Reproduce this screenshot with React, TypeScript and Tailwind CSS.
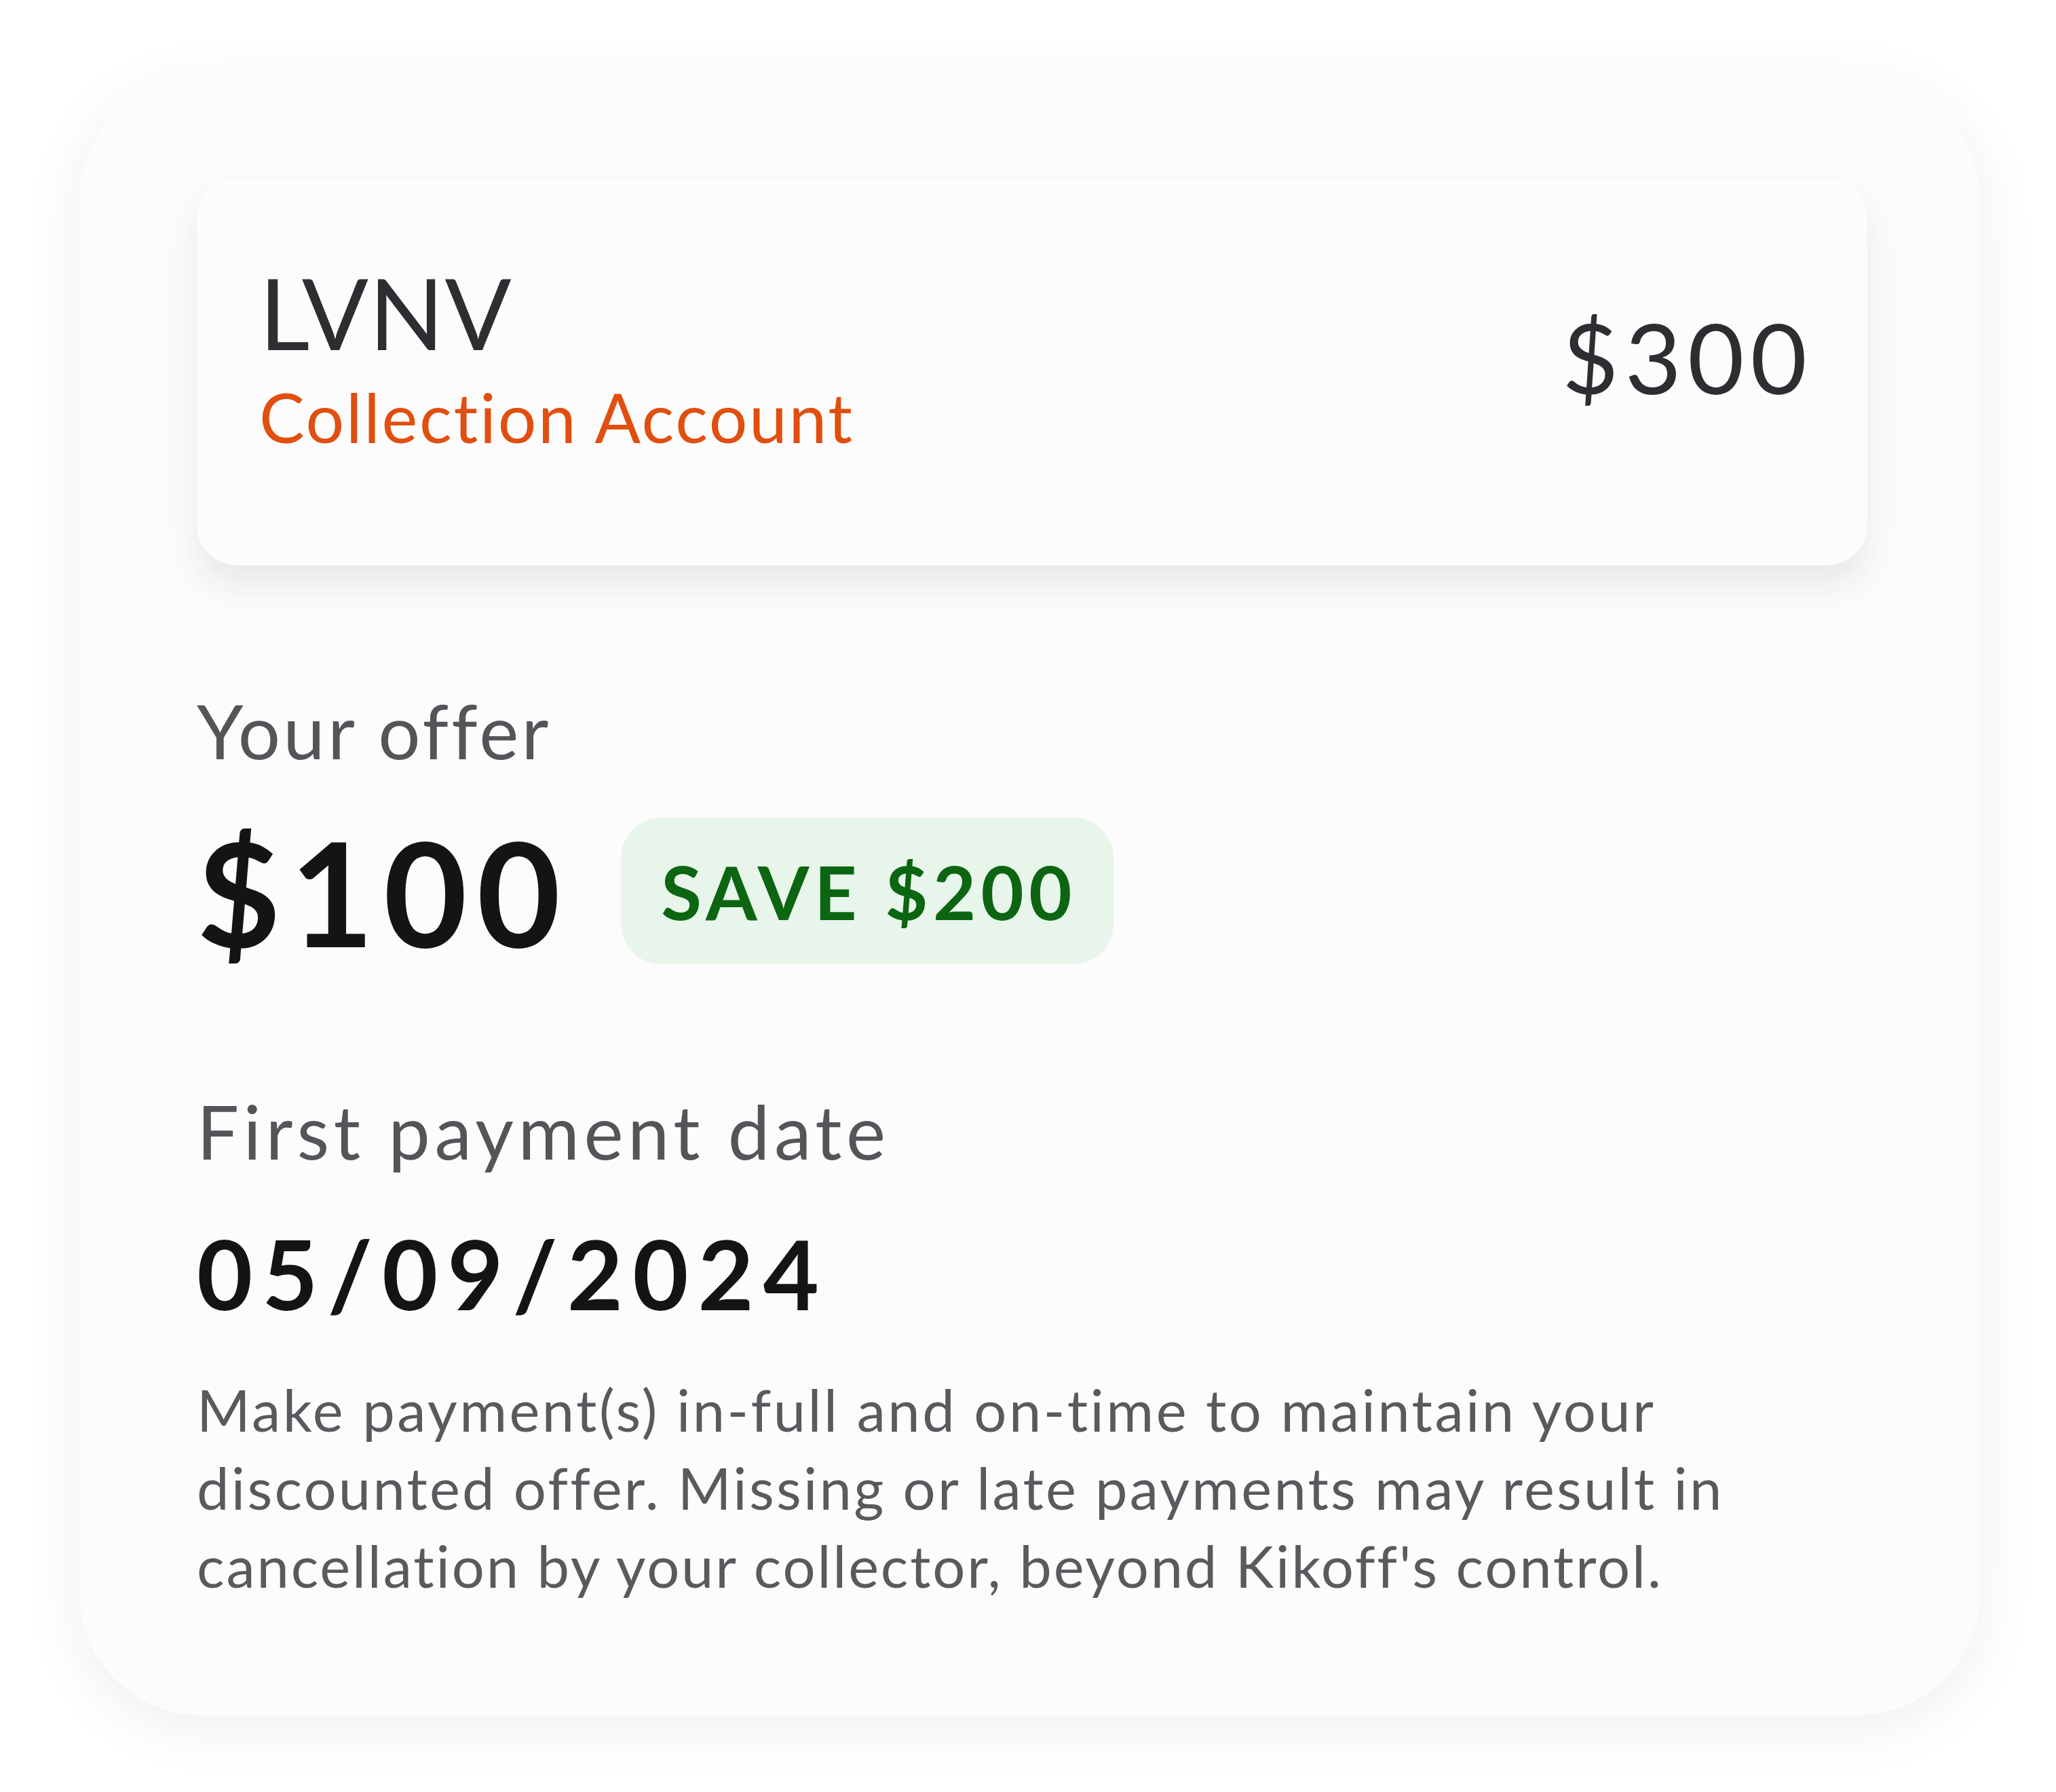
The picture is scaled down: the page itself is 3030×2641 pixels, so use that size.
export default function App() {
  return (
    <div className="w-[3030px] h-[2641px] bg-white pl-[117px] pt-[114px] font-['Lato',sans-serif] [font-variant-ligatures:none]">
      <div className="w-[2801px] h-[2414px] rounded-[180px] bg-[#fdfcfd] pt-[150px] pl-[173px] pr-[166px] shadow-[0_16px_90px_rgba(0,0,0,0.07)]">
        {/* creditor card */}
        <div className="flex items-center justify-between rounded-[60px] bg-[#fdfcfd] px-[92px] pt-[124px] pb-[169px] shadow-[0_28px_56px_rgba(40,30,60,0.1)]">
          <div className="flex flex-col">
            <span className="text-[145px] leading-none tracking-[1px] text-[#2e2d31]">LVNV</span>
            <span className="mt-[31px] text-[100px] leading-none tracking-[2.7px] text-[#e04f0f]">Collection Account</span>
          </div>
          <span className="-mr-[12px] text-[144px] leading-none tracking-[9px] text-[#2e2d31]">$300</span>
        </div>

        {/* offer */}
        <div className="mt-[188px] text-[110px] leading-none tracking-[4.2px] text-[#555459]">Your offer</div>
        <div className="mt-[74px] flex items-center gap-[75px]">
          <span className="text-[213px] leading-none tracking-[14px] font-bold text-[#151316]">$100</span>
          <span className="flex h-[216px] items-center rounded-[60px] bg-[#e7f5ea] pl-[59px] pr-[54px] text-[109px] leading-none tracking-[7.5px] font-bold text-[#0c6510]">
            SAVE $200
          </span>
        </div>

        {/* payment date */}
        <div className="mt-[190px] text-[110px] leading-none tracking-[6.5px] text-[#555459]">First payment date</div>
        <div className="mt-[84px] text-[142px] leading-none tracking-[14px] font-bold text-[#151316]">05/09/2024</div>

        <p className="mt-[73px] text-[85px] leading-[115px] text-[#5a595e]">
          <span className="block whitespace-nowrap tracking-[3.4px]">Make payment(s) in-full and on-time to maintain your</span>
          <span className="block whitespace-nowrap tracking-[3.2px]">discounted offer. Missing or late payments may result in</span>
          <span className="block whitespace-nowrap tracking-[2.8px]">cancellation by your collector, beyond Kikoff's control.</span>
        </p>
      </div>
    </div>
  );
}
